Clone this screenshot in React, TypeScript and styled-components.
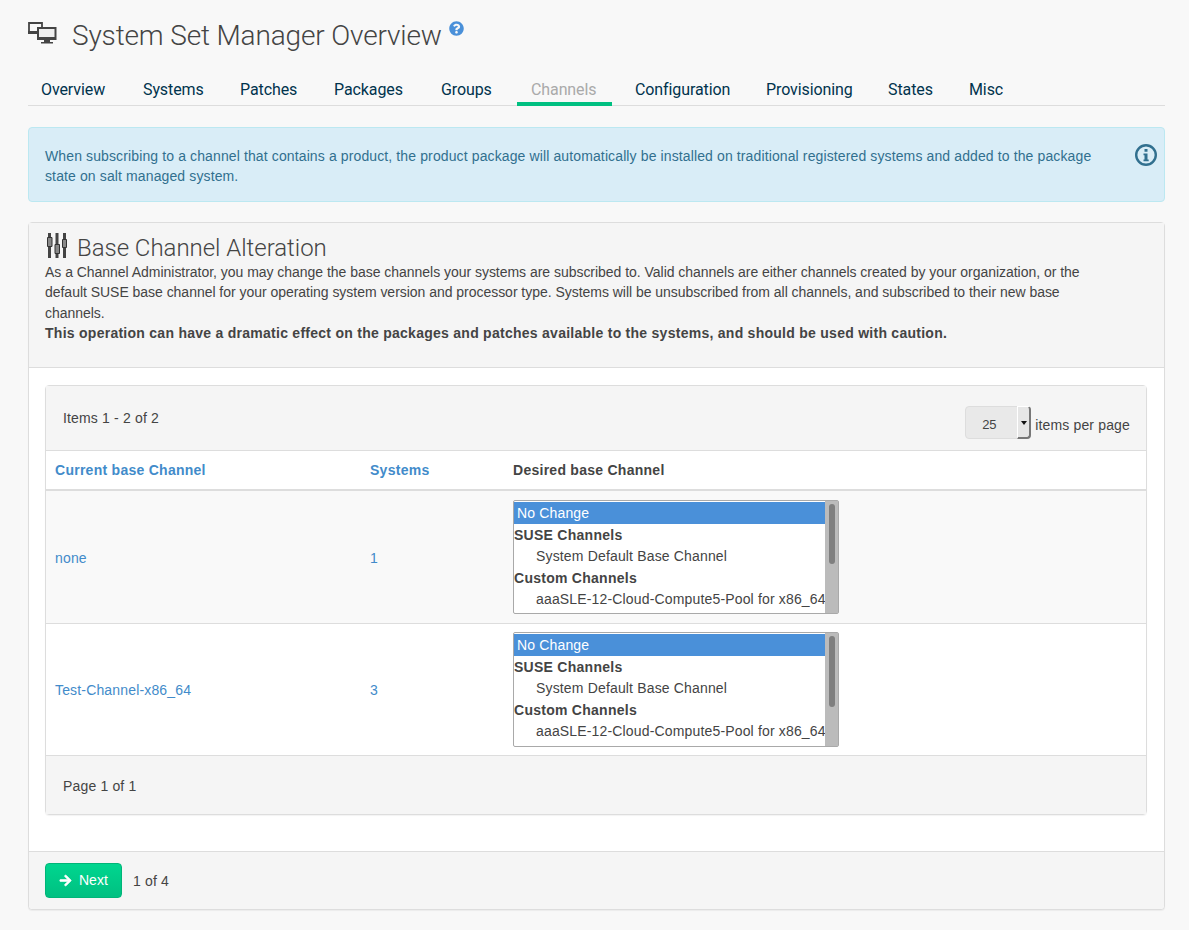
import React from "react";
import styled, { createGlobalStyle } from "styled-components";
import { FaArrowRight, FaQuestionCircle } from "react-icons/fa";

const GlobalStyle = createGlobalStyle`
  html, body {
    margin: 0;
    padding: 0;
    background: #f8f8f8;
  }
  body {
    font-family: "Liberation Sans", Arial, sans-serif;
    font-size: 14px;
    line-height: 20px;
    letter-spacing: 0.16px;
    color: #444;
  }
  strong, th {
    letter-spacing: 0.265px;
  }
  * {
    box-sizing: border-box;
  }
`;

const Page = styled.div`
  padding: 0 24px 20px 28px;
`;

const Header = styled.div`
  display: flex;
  align-items: flex-start;
  height: 78px;
  padding-top: 18px;
`;

const IconSlot = styled.div`
  margin-top: 4px;
  line-height: 0;
`;

const Title = styled.h1`
  margin: 0 0 0 15px;
  font-family: Roboto, sans-serif;
  font-weight: 300;
  font-size: 28px;
  line-height: 36px;
  letter-spacing: -0.15px;
  color: #444;
`;

const HelpLink = styled.a`
  margin: 3px 0 0 7px;
  color: #4a90d9;
  font-size: 15px;
  line-height: 15px;
  display: block;
`;

const TabBar = styled.ul`
  display: flex;
  gap: 10px;
  list-style: none;
  margin: 0;
  padding: 0;
  height: 28px;
  border-bottom: 1px solid #ddd;
`;

const Tab = styled.li<{ $active?: boolean; $w: number }>`
  width: ${(p) => p.$w}px;
  height: 28px;
  padding-left: ${(p) => (p.$active ? 14 : 13)}px;
  font-family: Roboto, sans-serif;
  font-size: 16px;
  line-height: 23px;
  letter-spacing: -0.1px;
  white-space: nowrap;
  color: ${(p) => (p.$active ? "#aaa" : "#00334d")};
  border-bottom: ${(p) => (p.$active ? "4px solid #00c081" : "none")};
`;

const Alert = styled.div`
  display: flex;
  justify-content: space-between;
  margin-top: 21px;
  height: 75px;
  padding: 18px 6px 0 16px;
  background: #d9edf7;
  border: 1px solid #bce8f1;
  border-radius: 4px;
  color: #31708f;
  letter-spacing: 0.12px;
`;

const AlertText = styled.div`
  width: 1060px;
`;

const AlertIcon = styled.svg`
  width: 24px;
  height: 24px;
  margin-top: -3px;
  flex: none;
`;

const Panel = styled.div`
  margin-top: 20px;
  background: #fff;
  border: 1px solid #ddd;
  border-radius: 4px;
  box-shadow: 0 1px 1px rgba(0, 0, 0, 0.05);
`;

const PanelHeading = styled.div`
  height: 145px;
  padding: 9px 16px 0;
  background: #f5f5f5;
  border-bottom: 1px solid #ddd;
`;

const HeadingRow = styled.div`
  display: flex;
  align-items: flex-start;
  height: 30px;
  padding-left: 2px;
  svg {
    margin-top: 1px;
  }
`;

const HeadingTitle = styled.h3`
  margin: 1px 0 0 10px;
  font-family: Roboto, sans-serif;
  font-weight: 300;
  font-size: 24px;
  line-height: 31px;
  letter-spacing: -0.03px;
  color: #444;
`;

const Description = styled.p`
  max-width: 1045px;
  margin: 0;
  line-height: 20.4px;
  letter-spacing: -0.03px;
  strong {
    white-space: nowrap;
  }
`;

const PanelBody = styled.div`
  padding: 17px 17px 36px 16px;
`;

const ListCard = styled.div`
  border: 1px solid #ddd;
  border-radius: 4px;
  box-shadow: 0 1px 1px rgba(0, 0, 0, 0.05);
`;

const ListTop = styled.div`
  display: flex;
  justify-content: space-between;
  height: 65px;
  padding: 22px 16px 0 17px;
  background: #f5f5f5;
  border-bottom: 1px solid #ddd;
`;

const PerPage = styled.div`
  display: flex;
  align-items: flex-start;
  gap: 4px;
  margin-top: -2px;
`;

const PerPageLabel = styled.span`
  margin-top: 9px;
`;

const PageSizeBox = styled.div`
  position: relative;
  width: 66px;
  height: 33px;
`;

const PageSize = styled.select`
  display: block;
  width: 66px;
  height: 33px;
  padding: 4px 0 0 16px;
  appearance: none;
  font-family: "Liberation Sans", Arial, sans-serif;
  font-size: 13px;
  color: #444;
  background: #e9e9e9;
  border: 1px solid #ddd;
  border-radius: 4px;
`;

const DropButton = styled.span`
  position: absolute;
  top: 0;
  right: 0;
  width: 14px;
  height: 33px;
  display: flex;
  justify-content: center;
  padding-top: 14px;
  background: #e6e6e6;
  border-style: solid;
  border-width: 1px 2px 2px 1px;
  border-color: #fff #777 #777 #fff;
  border-radius: 0 4px 4px 0;
  &::after {
    content: "";
    width: 0;
    height: 0;
    border-style: solid;
    border-width: 4px 3px 0;
    border-color: #111 transparent transparent;
  }
`;

const Table = styled.table`
  width: 100%;
  border-collapse: collapse;
  table-layout: fixed;
`;

const HeadCell = styled.th<{ $w?: number; $link?: boolean }>`
  width: ${(p) => (p.$w ? `${p.$w}px` : "auto")};
  height: 39px;
  padding: 0 9px;
  text-align: left;
  font-weight: 700;
  color: ${(p) => (p.$link ? "#428bca" : "#444")};
  border-bottom: 2px solid #ddd;
`;

const Row = styled.tr<{ $odd?: boolean }>`
  background: ${(p) => (p.$odd ? "#f9f9f9" : "#fff")};
`;

const Cell = styled.td<{ $h: number; $top: number }>`
  height: ${(p) => p.$h}px;
  padding: ${(p) => p.$top}px 9px 0;
  border-bottom: 1px solid #ddd;
  color: #428bca;
`;

const ChannelBox = styled.div`
  position: relative;
  width: 326px;
`;

const ChannelSelect = styled.select<{ $h: number }>`
  display: block;
  width: 326px;
  height: ${(p) => p.$h}px;
  padding: 1px 0;
  overflow: hidden;
  font-family: "Liberation Sans", Arial, sans-serif;
  font-size: 14px;
  letter-spacing: 0.16px;
  color: #444;
  background: #fff;
  border: 1px solid #a9a9a9;
  outline: none;
  optgroup {
    margin-left: -2px;
    padding-top: 3px;
    letter-spacing: 0.265px;
  }
  option {
    padding: 3px;
    letter-spacing: 0.16px;
  }
  optgroup option {
    padding-left: 22px;
    margin-left: 2px;
  }
  option:checked {
    background: #4a90d9 linear-gradient(#4a90d9, #4a90d9);
    color: #fff;
  }
`;

const ScrollTrack = styled.div`
  position: absolute;
  top: 1px;
  right: 1px;
  bottom: 1px;
  width: 13px;
  background: #bbb;
`;

const ScrollThumb = styled.div<{ $h: number }>`
  width: 6px;
  height: ${(p) => p.$h}px;
  margin: 3px 0 0 4px;
  background: #7f7f7f;
  border-radius: 3px;
`;

const ListFooter = styled.div`
  height: 58px;
  padding: 20px 17px 0;
  background: #f5f5f5;
`;

const PanelFooter = styled.div`
  display: flex;
  align-items: center;
  gap: 11px;
  height: 58px;
  padding: 0 16px;
  background: #f5f5f5;
  border-top: 1px solid #ddd;
  border-radius: 0 0 4px 4px;
`;

const NextButton = styled.button`
  display: flex;
  align-items: center;
  gap: 7px;
  width: 77px;
  height: 35px;
  padding: 0 13px;
  font-family: "Liberation Sans", Arial, sans-serif;
  font-size: 14px;
  color: #fff;
  background: linear-gradient(#00d68f, #00c081);
  border: 1px solid #00b578;
  border-radius: 4px;
`;

const FooterNote = styled.span`
  margin-top: 2px;
`;

const tabs = [
  { label: "Overview", w: 92 },
  { label: "Systems", w: 87 },
  { label: "Patches", w: 84 },
  { label: "Packages", w: 97 },
  { label: "Groups", w: 79 },
  { label: "Channels", w: 95 },
  { label: "Configuration", w: 121 },
  { label: "Provisioning", w: 112 },
  { label: "States", w: 71 },
  { label: "Misc", w: 59 },
];

const rows = [
  { name: "none", systems: 1, rowH: 133, listH: 114, thumbH: 60 },
  { name: "Test-Channel-x86_64", systems: 3, rowH: 132, listH: 115, thumbH: 71 },
];

const SystemsIcon = () => (
  <svg width="29" height="22" viewBox="0 0 29 22">
    <path d="M1 1h13v10H1z" fill="#f8f8f8" stroke="#444" strokeWidth="1.800" />
    <path d="M0 9h14v3H0z" fill="#444" />
    <path d="M9 5h19.500v13H9z" fill="#444" />
    <path d="M11 7h15.500v8H11z" fill="#eee" />
    <path d="M16 18h6v2h3v1.500H13V20h3z" fill="#444" />
  </svg>
);

const SlidersIcon = () => (
  <svg width="20" height="25" viewBox="0 0 20 25" fill="#444">
    <path d="M1 0h3v25H1zM8.500 0h3v25h-3zM16 0h3v25h-3z" />
    <path
      d="M.5 4.500h4.500v9H.5zM8 11.500h4.500v9H8zM15.500 6.500h4v8h-4z"
      fill="#888"
      stroke="#333"
    />
  </svg>
);

const ChannelList: React.FC<{ height: number; thumb: number }> = ({ height, thumb }) => (
  <ChannelBox>
    <ChannelSelect size={5} defaultValue="none" $h={height}>
      <option value="none">No Change</option>
      <optgroup label="SUSE Channels">
        <option value="default">System Default Base Channel</option>
      </optgroup>
      <optgroup label="Custom Channels">
        <option value="pool">aaaSLE-12-Cloud-Compute5-Pool for x86_64</option>
        <option value="updates">aaaSLE-12-Cloud-Compute5-Updates for x86_64</option>
        <option value="test">Test-Channel-x86_64</option>
      </optgroup>
    </ChannelSelect>
    <ScrollTrack>
      <ScrollThumb $h={thumb} />
    </ScrollTrack>
  </ChannelBox>
);

const App: React.FC = () => {
  return (
    <Page>
      <GlobalStyle />
      <Header>
        <IconSlot>
          <SystemsIcon />
        </IconSlot>
        <Title>System Set Manager Overview</Title>
        <HelpLink>
          <FaQuestionCircle />
        </HelpLink>
      </Header>
      <TabBar>
        {tabs.map((t) => (
          <Tab key={t.label} $w={t.w} $active={t.label === "Channels"}>
            {t.label}
          </Tab>
        ))}
      </TabBar>
      <Alert>
        <AlertText>
          When subscribing to a channel that contains a product, the product
          package will automatically be installed on traditional registered
          systems and added to the package state on salt managed system.
        </AlertText>
        <AlertIcon viewBox="0 0 24 24">
          <circle cx="12" cy="12" r="9.800" fill="none" stroke="#31708f" strokeWidth="2.400" />
          <path d="M10.500 6h3v2.800h-3zM9.500 10.500h4v6h1.200v1.800H9.500v-1.800h1v-4.200h-1z" fill="#31708f" />
        </AlertIcon>
      </Alert>
      <Panel>
        <PanelHeading>
          <HeadingRow>
            <SlidersIcon />
            <HeadingTitle>Base Channel Alteration</HeadingTitle>
          </HeadingRow>
          <Description>
            As a Channel Administrator, you may change the base channels your
            systems are subscribed to. Valid channels are either channels
            created by your organization, or the default SUSE base channel for
            your operating system version and processor type. Systems will be
            unsubscribed from all channels, and subscribed to their new base
            channels.
            <br />
            <strong>
              This operation can have a dramatic effect on the packages and
              patches available to the systems, and should be used with caution.
            </strong>
          </Description>
        </PanelHeading>
        <PanelBody>
          <ListCard>
            <ListTop>
              <span>Items 1 - 2 of 2</span>
              <PerPage>
                <PageSizeBox>
                  <PageSize defaultValue="25">
                    <option value="25">25</option>
                    <option value="50">50</option>
                    <option value="100">100</option>
                  </PageSize>
                  <DropButton />
                </PageSizeBox>
                <PerPageLabel>items per page</PerPageLabel>
              </PerPage>
            </ListTop>
            <Table>
              <thead>
                <tr>
                  <HeadCell $w={315} $link>
                    Current base Channel
                  </HeadCell>
                  <HeadCell $w={143} $link>
                    Systems
                  </HeadCell>
                  <HeadCell>Desired base Channel</HeadCell>
                </tr>
              </thead>
              <tbody>
                {rows.map((r, i) => (
                  <Row key={r.name} $odd={i === 0}>
                    <Cell $h={r.rowH} $top={2}>
                      {r.name}
                    </Cell>
                    <Cell $h={r.rowH} $top={2}>
                      {r.systems}
                    </Cell>
                    <Cell $h={r.rowH} $top={1}>
                      <ChannelList height={r.listH} thumb={r.thumbH} />
                    </Cell>
                  </Row>
                ))}
              </tbody>
            </Table>
            <ListFooter>Page 1 of 1</ListFooter>
          </ListCard>
        </PanelBody>
        <PanelFooter>
          <NextButton>
            <FaArrowRight size={13} stroke="#fff" strokeWidth={24} />
            Next
          </NextButton>
          <FooterNote>1 of 4</FooterNote>
        </PanelFooter>
      </Panel>
    </Page>
  );
};

export default App;
